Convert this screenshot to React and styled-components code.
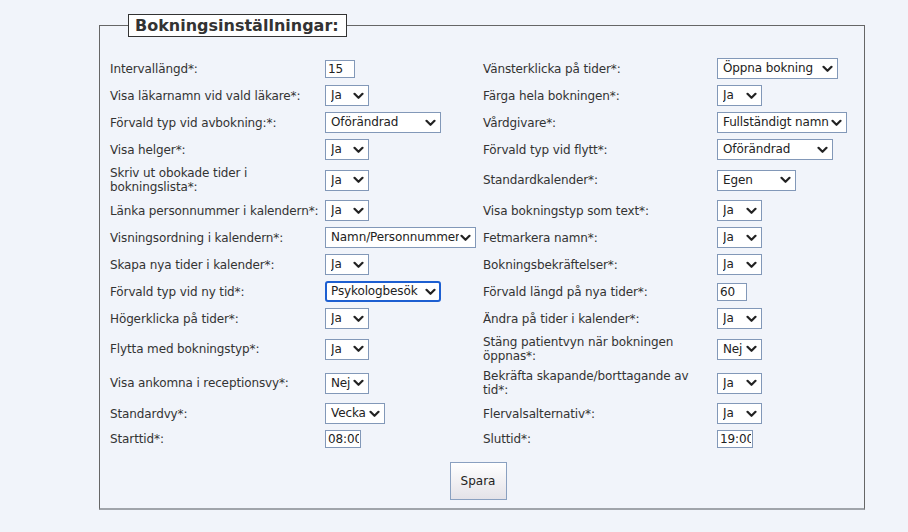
import React from "react";
import styled, { createGlobalStyle } from "styled-components";

const GlobalStyle = createGlobalStyle`
  html, body {
    margin: 0;
    padding: 0;
    background: #f1f4fa;
  }
  body {
    font-family: "DejaVu Sans", Verdana, sans-serif;
    font-size: 12px;
    letter-spacing: -0.12px;
    color: #333;
  }
`;

const leftRows = [
  { label: "Intervallängd*:", type: "input", value: "15", width: 30 },
  { label: "Visa läkarnamn vid vald läkare*:", value: "Ja", width: 44 },
  { label: "Förvald typ vid avbokning:*:", value: "Oförändrad", width: 116 },
  { label: "Visa helger*:", value: "Ja", width: 44 },
  { label: "Skriv ut obokade tider i bokningslista*:", value: "Ja", width: 44 },
  { label: "Länka personnummer i kalendern*:", value: "Ja", width: 44 },
  { label: "Visningsordning i kalendern*:", value: "Namn/Personnummer", width: 151 },
  { label: "Skapa nya tider i kalender*:", value: "Ja", width: 44 },
  { label: "Förvald typ vid ny tid*:", value: "Psykologbesök", width: 116, focused: true },
  { label: "Högerklicka på tider*:", value: "Ja", width: 44 },
  { label: "Flytta med bokningstyp*:", value: "Ja", width: 44 },
  { label: "Visa ankomna i receptionsvy*:", value: "Nej", width: 44 },
  { label: "Standardvy*:", value: "Vecka", width: 60 },
  { label: "Starttid*:", type: "input", value: "08:00", width: 36 },
];

const rightRows = [
  { label: "Vänsterklicka på tider*:", value: "Öppna bokning", width: 121 },
  { label: "Färga hela bokningen*:", value: "Ja", width: 45 },
  { label: "Vårdgivare*:", value: "Fullständigt namn", width: 130 },
  { label: "Förvald typ vid flytt*:", value: "Oförändrad", width: 116 },
  { label: "Standardkalender*:", value: "Egen", width: 79 },
  { label: "Visa bokningstyp som text*:", value: "Ja", width: 45 },
  { label: "Fetmarkera namn*:", value: "Ja", width: 45 },
  { label: "Bokningsbekräftelser*:", value: "Ja", width: 45 },
  { label: "Förvald längd på nya tider*:", type: "input", value: "60", width: 30 },
  { label: "Ändra på tider i kalender*:", value: "Ja", width: 45 },
  { label: "Stäng patientvyn när bokningen öppnas*:", value: "Nej", width: 45 },
  { label: "Bekräfta skapande/borttagande av tid*:", value: "Ja", width: 45 },
  { label: "Flervalsalternativ*:", value: "Ja", width: 45 },
  { label: "Sluttid*:", type: "input", value: "19:00", width: 36 },
];

const Chevron = () => (
  <svg width="11" height="8" viewBox="0 0 11 8">
    <path
      d="M1.5 1.8 L5.5 5.8 L9.5 1.8"
      fill="none"
      stroke="#222"
      strokeWidth="2.2"
      strokeLinecap="round"
      strokeLinejoin="round"
    />
  </svg>
);

const SelectBox = ({ value, width, focused }) => (
  <StyledSelect $width={width} $focused={focused}>
    <span className="select-value">{value}</span>
    <Chevron />
  </StyledSelect>
);

const Control = ({ row }) =>
  row.type === "input" ? (
    <TextInput $width={row.width} defaultValue={row.value} />
  ) : (
    <SelectBox value={row.value} width={row.width} focused={row.focused} />
  );

const App = () => {
  return (
    <>
      <GlobalStyle />
      <Page>
        <Settings>
          <Legend>Bokningsinställningar:</Legend>
          <FormGrid>
            {leftRows.map((row, index) => (
              <React.Fragment key={row.label}>
                <Label>{row.label}</Label>
                <Cell>
                  <Control row={row} />
                </Cell>
                <Label>{rightRows[index].label}</Label>
                <Cell>
                  <Control row={rightRows[index]} />
                </Cell>
              </React.Fragment>
            ))}
          </FormGrid>
          <ButtonRow>
            <SaveButton>Spara</SaveButton>
          </ButtonRow>
        </Settings>
      </Page>
    </>
  );
};

export default App;

const Page = styled.div`
  padding: 14px 0 0 99px;
  width: 908px;
  height: 532px;
  box-sizing: border-box;
`;

const Settings = styled.fieldset`
  width: 766px;
  box-sizing: border-box;
  margin: 0;
  padding: 18px 0 8px 10px;
  border: 1px solid #666;
  border-bottom: 2px solid #a0a4aa;
`;

const Legend = styled.legend`
  margin-left: 18px;
  padding: 3px 7px 3px 6px;
  border: 1px solid #333;
  background: #fff;
  font-weight: bold;
  font-size: 16px;
  letter-spacing: 0;
  color: #333;
  line-height: 15px;
`;

const FormGrid = styled.div`
  display: grid;
  grid-template-columns: 215px 158px 234px 1fr;
  align-items: center;
`;

const Label = styled.div`
  padding: 3px 2px 3px 0;
  line-height: 14px;
`;

const Cell = styled.div`
  padding: 3px 0;
  display: flex;
  align-items: center;
`;

const StyledSelect = styled.div`
  width: ${(p) => p.$width}px;
  height: 21px;
  box-sizing: border-box;
  display: flex;
  align-items: center;
  justify-content: space-between;
  padding: ${(p) => (p.$focused ? "0 3px 0 4px" : "0 4px 0 5px")};
  background: #fff;
  border: ${(p) => (p.$focused ? "2px solid #1d5fd1" : "1px solid #8298b8")};
  border-radius: ${(p) => (p.$focused ? "3px" : "0")};
  color: #222;
  overflow: hidden;
  .select-value {
    white-space: nowrap;
    overflow: hidden;
    line-height: 19px;
  }
  svg {
    flex-shrink: 0;
    margin-left: 1px;
  }
`;

const TextInput = styled.input`
  width: ${(p) => p.$width}px;
  height: 18px;
  box-sizing: border-box;
  padding: 0 1px 0 2px;
  border: 1px solid #8298b8;
  background: #fff;
  font-family: inherit;
  font-size: 12px;
  letter-spacing: -0.12px;
  color: #222;
  outline: none;
`;

const ButtonRow = styled.div`
  display: flex;
  justify-content: center;
  padding-top: 11px;
  padding-right: 18px;
`;

const SaveButton = styled.button`
  width: 57px;
  height: 38px;
  border: 1px solid #8aa0c0;
  background: linear-gradient(#ffffff, #e4e2e8);
  font-family: inherit;
  font-size: 12px;
  color: #222;
  cursor: pointer;
`;
